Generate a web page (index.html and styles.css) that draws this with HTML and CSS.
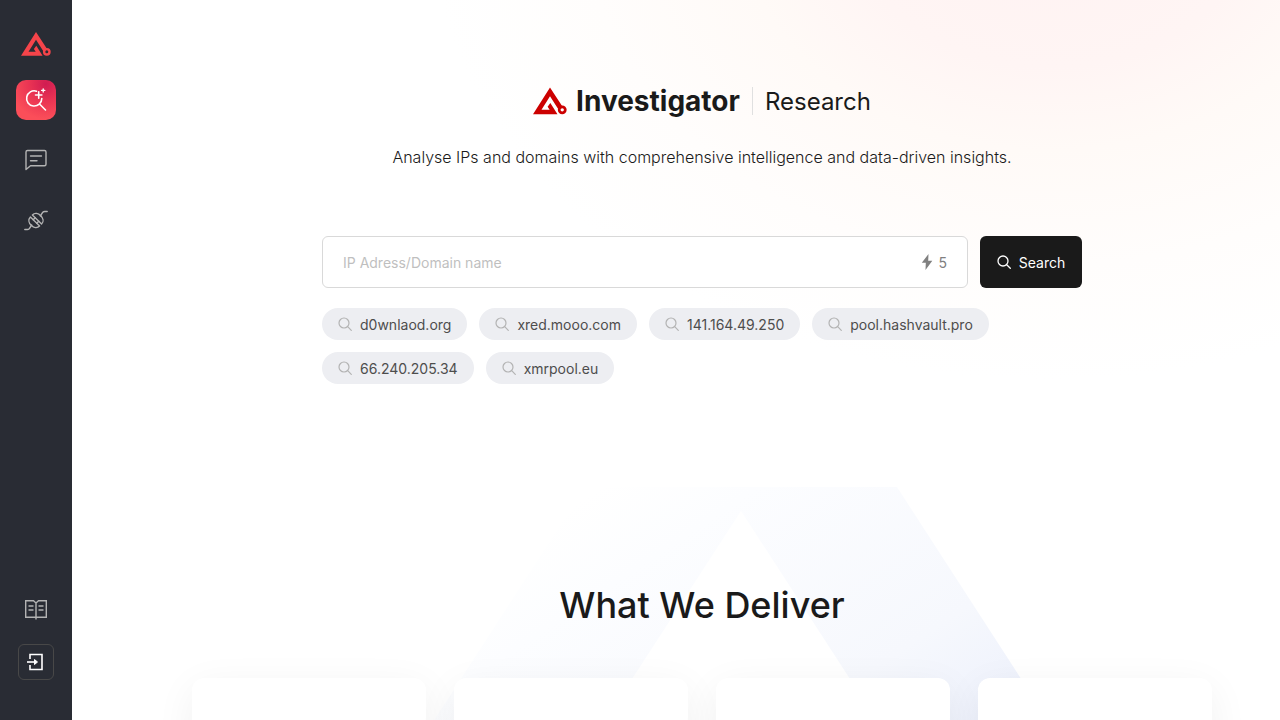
FILE: index.html
```
<!DOCTYPE html>
<html lang="en">
<head>
    <meta charset="UTF-8">
    <meta name="viewport" content="width=device-width, initial-scale=1.0">
    <title>Investigator Research</title>
    <link rel="stylesheet" href="styles.css">
</head>
<body>
    <!-- Shared icons -->
    <svg class="sprite" aria-hidden="true">
        <symbol id="logo" viewBox="0 0 100 80">
            <path fill="currentColor" d="M50 0L0 79h72L51 46l-8 11 6 9H25l25-40 25 39 12-8z"/>
            <circle cx="86" cy="66" r="9" fill="none" stroke="currentColor" stroke-width="8"/>
        </symbol>
        <symbol id="search" viewBox="0 0 14 14">
            <g fill="none" stroke="currentColor" stroke-linecap="round">
                <circle cx="6" cy="6" r="5"/>
                <path d="M9.700 9.700l3.600 3.600"/>
            </g>
        </symbol>
    </svg>

    <div class="layout">
        <nav class="sidebar">
            <a href="#" class="brand" aria-label="Home">
                <svg width="30" height="24"><use href="#logo"/></svg>
            </a>
            <a href="#" class="nav-link active" aria-label="Research">
                <svg width="24" height="24" viewBox="0 0 24 24" fill="none" stroke="currentColor" stroke-width="1.600" stroke-linecap="round">
                    <path d="M12.500 3.200A7.600 7.600 0 1 0 17.800 10.500M15.500 16l6 6"/>
                    <path d="M14.700 3.800v6.400M11.500 7h6.400"/>
                    <path d="M19.200 .8v3.200M17.600 2.400h3.200" stroke-width="1.300"/>
                </svg>
            </a>
            <a href="#" class="nav-link" aria-label="Chat">
                <svg width="24" height="24" viewBox="0 0 24 24" fill="none" stroke="currentColor" stroke-width="1.400" stroke-linecap="round" stroke-linejoin="round">
                    <path d="M3.500 2.500h17a1.500 1.500 0 0 1 1.500 1.500v12.300a1.500 1.500 0 0 1-1.500 1.500H6.500L2 21.500V4a1.500 1.500 0 0 1 1.500-1.500z"/>
                    <path d="M6.500 8h11M6.500 12.800h6.500"/>
                </svg>
            </a>
            <a href="#" class="nav-link" aria-label="Integrations">
                <svg width="24" height="24" viewBox="0 0 24 24" fill="none" stroke="currentColor" stroke-width="1.400" stroke-linecap="round" stroke-linejoin="round">
                    <path d="M.8 21.500h2.400c1 0 1.600-.4 2.300-1.100L7.700 17M23.200 3.500h-2.400c-1 0-1.600.4-2.300 1.100L16.300 8"/>
                    <g transform="translate(12 12.500) rotate(-45)">
                        <path d="M-1.400-6.500v13C-4.800 6.500-6.800 3.500-6.800 0s2-6.500 5.400-6.500z"/>
                        <path d="M1.400-6.500v13C4.800 6.500 6.800 3.500 6.800 0s-2-6.500-5.400-6.500z"/>
                        <path d="M-1.400-2.500h2.800M-1.400 2.500h2.800"/>
                    </g>
                </svg>
            </a>
            <div class="nav-bottom">
                <a href="#" class="nav-link" aria-label="Documentation">
                    <svg width="24" height="24" viewBox="0 0 24 24" fill="none" stroke="currentColor" stroke-width="1.400">
                        <path d="M12 21.500V5L9.500 2.800H1.700v16.500h20.600V2.800h-7.800L12 5"/>
                        <path d="M4.500 8h5M4.500 12h5M14.500 8h5M14.500 12h5"/>
                    </svg>
                </a>
                <button type="button" class="login" aria-label="Log in">
                    <svg width="18" height="18" viewBox="0 0 18 18" fill="none" stroke="currentColor" stroke-width="1.600">
                        <path d="M3 6V1.500h12v15H3V12"/>
                        <path d="M0 9h8"/>
                        <path d="M7.500 6.500L10.500 9l-3 2.500z" fill="currentColor" stroke-width="1"/>
                    </svg>
                </button>
            </div>
        </nav>

        <main class="content">
            <section class="hero">
                <h1 class="title">
                    <svg class="title-logo" width="34" height="28"><use href="#logo"/></svg>
                    <span class="title-name">Investigator</span>
                    <span class="title-product">Research</span>
                </h1>
                <p class="tagline">Analyse IPs and domains with comprehensive intelligence and data-driven insights.</p>

                <form class="search-form">
                    <div class="search-field">
                        <input type="text" id="query" aria-label="IP address or domain name" placeholder="IP Adress/Domain name">
                        <span class="credits">
                            <svg width="12" height="16" viewBox="0 0 12 16"><path fill="currentColor" d="M7.500 0L.8 8.800h4L4.500 16l6.800-9.200H7.200z"/></svg>
                            5
                        </span>
                    </div>
                    <button type="submit" class="search-button">
                        <svg width="14" height="14" stroke-width="1.300"><use href="#search"/></svg>
                        Search
                    </button>
                </form>

                <div class="examples">
                    <button type="button" class="chip"><svg width="14" height="14"><use href="#search"/></svg>d0wnlaod.org</button>
                    <button type="button" class="chip"><svg width="14" height="14"><use href="#search"/></svg>xred.mooo.com</button>
                    <button type="button" class="chip"><svg width="14" height="14"><use href="#search"/></svg>141.164.49.250</button>
                    <button type="button" class="chip"><svg width="14" height="14"><use href="#search"/></svg>pool.hashvault.pro</button>
                    <button type="button" class="chip"><svg width="14" height="14"><use href="#search"/></svg>66.240.205.34</button>
                    <button type="button" class="chip"><svg width="14" height="14"><use href="#search"/></svg>xmrpool.eu</button>
                </div>
            </section>

            <section class="deliver">
                <svg class="deliver-shape" width="660" height="340" viewBox="0 0 660 340" aria-hidden="true">
                    <defs>
                        <linearGradient id="fade" gradientUnits="userSpaceOnUse" x1="220" y1="-20" x2="460" y2="340">
                            <stop offset="0" stop-color="#fff"/>
                            <stop offset=".2" stop-color="#fcfdff"/>
                            <stop offset=".7" stop-color="#f6f8fd"/>
                            <stop offset="1" stop-color="#ecf0fc"/>
                        </linearGradient>
                    </defs>
                    <path fill="url(#fade)" d="M174 0H486L706 340H535L330 24 125 340H-46z"/>
                </svg>
                <h2>What We Deliver</h2>
                <div class="cards">
                    <article class="card"></article>
                    <article class="card"></article>
                    <article class="card"></article>
                    <article class="card"></article>
                </div>
            </section>
        </main>
    </div>
</body>
</html>
```
FILE: styles.css
```
* {
    box-sizing: border-box;
}
body {
    margin: 0;
    font-family: Inter, "Liberation Sans", sans-serif;
    color: #1a1a1a;
    background: #fff;
}
button, input {
    font-family: inherit;
}
svg {
    flex-shrink: 0;
}
.sprite {
    position: absolute;
    width: 0;
    height: 0;
}
.layout {
    display: flex;
    height: 100vh;
}

/* Sidebar */
.sidebar {
    width: 72px;
    flex-shrink: 0;
    padding: 32px 0 40px;
    display: flex;
    flex-direction: column;
    align-items: center;
    gap: 20px;
    background: #292c34;
}
.brand {
    height: 28px;
    color: #f5444a;
}
.nav-link {
    width: 40px;
    height: 40px;
    display: flex;
    align-items: center;
    justify-content: center;
    border-radius: 10px;
    color: #b3b3b3;
}
.nav-link.active {
    color: #fff;
    background: radial-gradient(circle at 75% 10%, #d01c52, #e93353 35%, #fb4e59 75%);
}
.nav-bottom {
    margin-top: auto;
    display: flex;
    flex-direction: column;
    align-items: center;
    gap: 14px;
}
.login {
    width: 36px;
    height: 36px;
    padding: 0;
    display: flex;
    align-items: center;
    justify-content: center;
    color: #fff;
    background: none;
    border: 1px solid #484848;
    border-radius: 6px;
    cursor: pointer;
}

/* Page */
.content {
    flex: 1;
    min-width: 0;
    padding-left: 52px;
    overflow: hidden auto;
    scrollbar-width: none;
    background: radial-gradient(ellipse 620px 460px at 81% -80px, #fff2f2, #fff5f4 32%, #fffaf7 50%, #fffdfc 75%, #fff);
}
.hero {
    max-width: 800px;
    margin: 0 auto;
    padding: 84px 20px 103px;
}
.title {
    display: flex;
    align-items: center;
    justify-content: center;
    height: 34px;
    margin: 0;
    font-weight: 400;
}
.title-logo {
    margin-right: 9px;
    color: #c00;
}
.title-name {
    padding-right: 12px;
    font-size: 28px;
    line-height: 28px;
    font-weight: 700;
    border-right: 1px solid #e0e0e0;
}
.title-product {
    padding-left: 12px;
    font-size: 24px;
}
.tagline {
    margin: 26px 0 66px;
    font-size: 16px;
    line-height: 26px;
    font-weight: 300;
    text-align: center;
}
.search-form {
    display: flex;
    gap: 12px;
}
.search-field {
    flex: 1;
    display: flex;
    align-items: center;
    height: 52px;
    padding: 0 20px;
    background: #fff;
    border: 1px solid #d9d9d9;
    border-radius: 6px;
}
.search-field input {
    flex: 1;
    min-width: 0;
    padding: 0;
    font-size: 14px;
    color: #1a1a1a;
    background: none;
    border: 0;
    outline: 0;
}
.search-field input::placeholder {
    color: #bfbfbf;
}
.credits {
    display: flex;
    align-items: center;
    gap: 5px;
    font-size: 14px;
    color: #808080;
}
.search-button {
    display: flex;
    align-items: center;
    justify-content: center;
    gap: 8px;
    min-width: 102px;
    padding: 0 16px;
    font-size: 14px;
    color: #fff;
    background: #1a1a1a;
    border: 0;
    border-radius: 6px;
    cursor: pointer;
}
.examples {
    display: flex;
    flex-wrap: wrap;
    gap: 12px;
    margin-top: 20px;
}
.chip {
    display: flex;
    align-items: center;
    gap: 8px;
    height: 32px;
    padding: 0 16px;
    font-size: 14px;
    color: #4d4d4d;
    background: #edeef2;
    border: 0;
    border-radius: 16px;
    cursor: pointer;
}
.chip svg {
    color: #b3b3b3;
    stroke-width: 1.2;
}

/* What we deliver */
.deliver {
    position: relative;
    max-width: 1060px;
    margin: 0 auto;
    padding: 91px 20px 60px;
}
/* Large faded triangle behind the heading and cards */
.deliver-shape {
    position: absolute;
    top: 0;
    left: 50%;
    margin-left: -291px;
    overflow: visible;
}
.deliver h2 {
    position: relative;
    margin: 0 0 46px;
    font-size: 36px;
    line-height: 54px;
    font-weight: 500;
    text-align: center;
}
.cards {
    position: relative;
    display: grid;
    grid-template-columns: repeat(4, 1fr);
    gap: 28px;
}
.card {
    min-height: 240px;
    background: #fff;
    border-radius: 12px;
    box-shadow: 0 10px 40px rgba(0, 0, 0, 0.06);
}
```
